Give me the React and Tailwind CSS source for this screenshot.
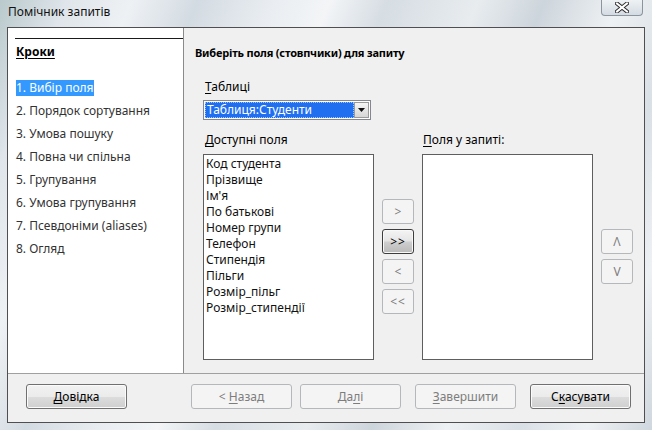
import React from "react";

const steps = [
  "1. Вибір поля",
  "2. Порядок сортування",
  "3. Умова пошуку",
  "4. Повна чи спільна",
  "5. Групування",
  "6. Умова групування",
  "7. Псевдоніми (aliases)",
  "8. Огляд",
];

const fields = [
  "Код студента",
  "Прізвище",
  "Ім'я",
  "По батькові",
  "Номер групи",
  "Телефон",
  "Стипендія",
  "Пільги",
  "Розмір_пільг",
  "Розмір_стипендії",
];

function Btn({ children, disabled, strong, className = "" }) {
  const look = disabled
    ? "border-[#b4b8bb] bg-[#f4f4f4] text-[#7d7d7d]"
    : strong
    ? "border-[#3d3d3d] bg-[linear-gradient(#f4f4f4_0%,#e6e6e6_45%,#cdcdcd_55%,#b9b9b9_100%)] text-black shadow-[inset_0_0_0_1px_#f8f8f8]"
    : "border-[#707070] bg-[linear-gradient(#f2f2f2_0%,#ebebeb_50%,#dddddd_50%,#cfcfcf_100%)] text-black shadow-[inset_0_0_0_1px_#fbfbfb]";
  return (
    <div className={`flex items-center justify-center rounded-[3px] border text-[12px] ${look} ${className}`}>
      {children}
    </div>
  );
}

function U({ children }) {
  return <span className="underline underline-offset-2">{children}</span>;
}

function CloseIcon() {
  return (
    <svg width="14" height="11" viewBox="0 0 14 11">
      <path d="M2 1.5 L12 9.5 M12 1.5 L2 9.5" stroke="#2b2b2b" strokeWidth="4" strokeLinecap="square" />
      <path d="M2 1.5 L12 9.5 M12 1.5 L2 9.5" stroke="#ffffff" strokeWidth="2" strokeLinecap="square" />
    </svg>
  );
}

export default function App() {
  return (
    <div className="flex h-[430px] w-[652px] flex-col overflow-hidden bg-[linear-gradient(112deg,#b9c9cc_0%,#dfe5ea_8%,#eef1f4_16%,#d3dbe2_24%,#e9edf1_33%,#f3f5f7_40%,#d6dde3_47%,#e8ecef_58%,#cdd5dc_66%,#eef1f3_75%,#d9e0e6_84%,#eef1f4_92%,#cfd7de_100%)] font-['Noto_Sans',sans-serif] text-black">
      <div className="flex h-[27px] shrink-0 items-start justify-between">
        <div className="ml-[8px] mt-[4px] text-[12px] leading-[16px] text-[#111]">Помічник запитів</div>
        <div className="mr-[9px] flex h-[16px] w-[42px] items-center justify-center rounded-b-[4px] border border-t-0 border-[#8c959e] bg-[linear-gradient(#eef2f5,#d4dbe2)]">
          <CloseIcon />
        </div>
      </div>

      <div className="mx-[7px] flex h-[396px] flex-col border border-[#4f4f4f] bg-[#f0f0f0]">
        <div className="flex h-[345px] shrink-0">
          <div className="flex w-[176px] shrink-0 flex-col border-r border-[#8a8a8a] bg-white">
            <div className="ml-[7px] mt-[10px] h-px bg-[#1a1a1a]" />
            <div className="ml-[8px] mt-[5px] h-[16px] text-[12px] font-bold leading-[16px] underline underline-offset-2">Кроки</div>
            <div className="mt-[20px] flex flex-col gap-[7px]">
              {steps.map((s, i) => (
                <div key={s} className="flex h-[16px]">
                  <div
                    className={`ml-[8px] text-[12px] leading-[16px] ${
                      i === 0 ? "bg-[#3399ff] text-white" : "text-[#333]"
                    }`}
                  >
                    {s}
                  </div>
                </div>
              ))}
            </div>
          </div>

          <div className="flex flex-1 flex-col">
            <div className="ml-[11px] mt-[17px] h-[16px] text-[11px] font-bold leading-[16px] tracking-[-0.2px]">
              Виберіть поля (стовпчики) для запиту
            </div>
            <div className="ml-[21px] mt-[18px] h-[16px] text-[12px] leading-[16px]">
              <U>Т</U>аблиці
            </div>
            <div className="ml-[19px] mt-[5px] flex h-[20px] w-[168px] border border-[#828790] bg-white p-px">
              <div className="flex flex-1 items-center border border-dotted border-[#9cc3ff] bg-[#1f6ff0] pl-[1px] text-[12px] leading-[16px] text-white">
                Таблиця:Студенти
              </div>
              <div className="flex w-[15px] items-center justify-center border border-[#9a9a9a] bg-[linear-gradient(#f5f5f5,#d6d6d6)]">
                <svg width="7" height="4" viewBox="0 0 7 4">
                  <path d="M0 0 H7 L3.5 4 Z" fill="#111" />
                </svg>
              </div>
            </div>

            <div className="ml-[19px] mt-[12px] flex gap-[8px]">
              <div className="flex w-[171px] flex-col">
                <div className="ml-[2px] h-[16px] text-[12px] leading-[16px]">
                  <U>Д</U>оступні поля
                </div>
                <div className="mt-[6px] h-[206px] border border-[#5e5e5e] bg-white pl-[2px] pt-px">
                  {fields.map((f) => (
                    <div key={f} className="h-[16px] text-[12px] leading-[16px] text-[#111]">
                      {f}
                    </div>
                  ))}
                </div>
              </div>

              <div className="flex w-[32px] flex-col gap-[5px] pt-[67px]">
                <Btn disabled className="h-[25px] text-[10px]">&gt;</Btn>
                <Btn strong className="h-[25px] text-[10px] tracking-[1px]">&gt;&gt;</Btn>
                <Btn disabled className="h-[25px] text-[10px]">&lt;</Btn>
                <Btn disabled className="h-[25px] text-[10px] tracking-[1px]">&lt;&lt;</Btn>
              </div>

              <div className="flex w-[171px] flex-col">
                <div className="ml-px h-[16px] text-[12px] leading-[16px]">
                  <U>П</U>оля у запиті:
                </div>
                <div className="mt-[6px] h-[206px] border border-[#5e5e5e] bg-white" />
              </div>

              <div className="flex w-[32px] flex-col gap-[5px] pt-[97px]">
                <Btn disabled className="h-[25px] text-[9px]">Λ</Btn>
                <Btn disabled className="h-[25px] text-[9px]">V</Btn>
              </div>
            </div>
          </div>
        </div>

        <div className="flex flex-1 items-start border-t border-[#a0a0a0] pt-[10px]">
          <Btn className="ml-[18px] h-[25px] w-[101px]">
            <span><U>Д</U>овідка</span>
          </Btn>
          <Btn disabled className="ml-[64px] h-[25px] w-[101px]">
            <span>&lt; <U>Н</U>азад</span>
          </Btn>
          <Btn disabled className="ml-[8px] h-[25px] w-[101px]">
            <span>Да<U>л</U>і</span>
          </Btn>
          <Btn disabled className="ml-[14px] h-[25px] w-[101px]">
            <span><U>З</U>авершити</span>
          </Btn>
          <Btn className="ml-[14px] h-[25px] w-[101px]">
            <span>С<U>к</U>асувати</span>
          </Btn>
        </div>
      </div>
    </div>
  );
}
